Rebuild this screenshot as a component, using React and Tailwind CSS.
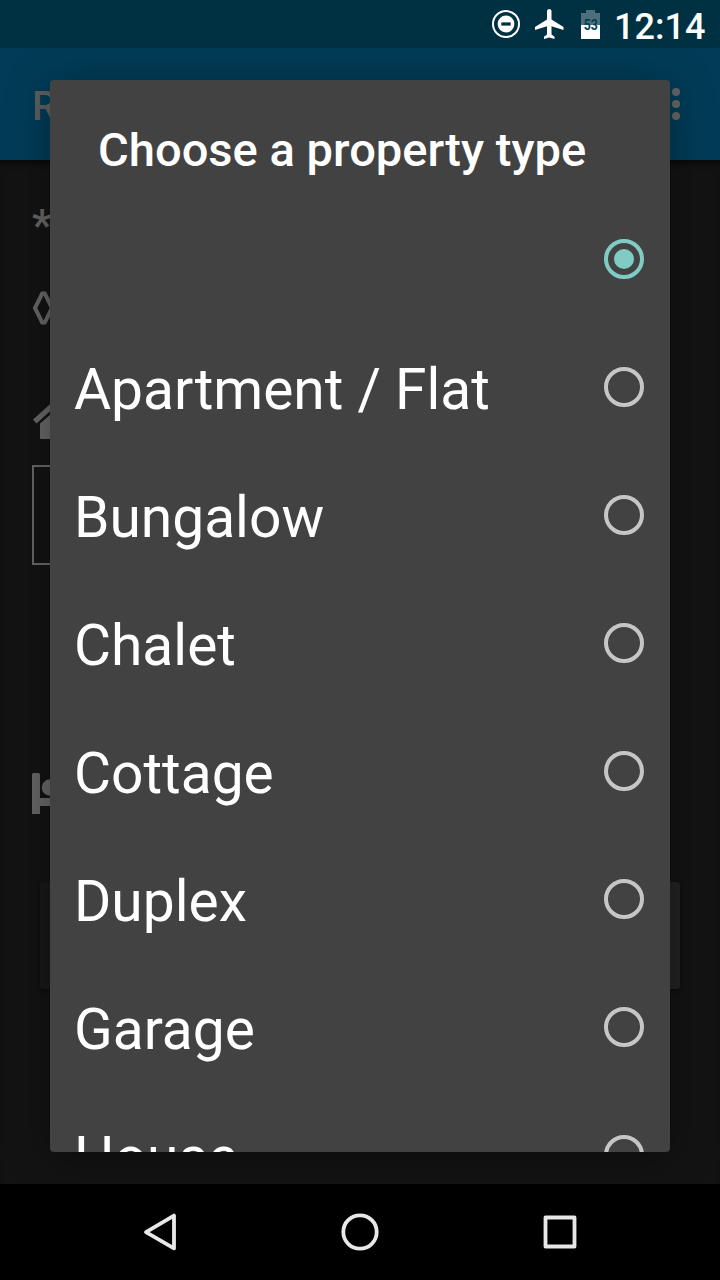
const OPTIONS = ['', 'Apartment / Flat', 'Bungalow', 'Chalet', 'Cottage', 'Duplex', 'Garage', 'House'];

function StatusBar() {
  return (
    <header className="flex h-12 shrink-0 items-center justify-end bg-[#003143] pr-4 text-white">
      <svg className="mr-[12px] h-7 w-7" viewBox="0 0 28 28" aria-hidden="true">
        <circle cx="14" cy="14" r="13" fill="none" stroke="currentColor" strokeWidth="2" />
        <circle cx="14" cy="14" r="8.4" fill="currentColor" />
        <rect x="9.3" y="12.4" width="9.4" height="3.2" fill="#003143" />
      </svg>
      <svg className="mr-[13px] h-9 w-9" viewBox="0 0 24 24" fill="currentColor" aria-hidden="true">
        <path d="M21 16v-2l-8-5V3.500c0-.83-.67-1.500-1.500-1.500S10 2.670 10 3.500V9l-8 5v2l8-2.500V19l-2 1.500V22l3.500-1 3.500 1v-1.500L13 19v-5.500l8 2.500z" />
      </svg>
      <svg className="mr-3.5 h-[29px] w-[19px]" viewBox="0 0 19 29" aria-hidden="true">
        <path d="M0 3h5V0h9v3h5v12H0z" fill="#4d6f7b" />
        <path d="M0 15h19v14H0z" fill="#fff" />
        <text transform="translate(9.700 20.200) scale(.82 1)" textAnchor="middle" fill="#003e54" className="font-['Roboto',sans-serif] text-[15px] font-bold">53</text>
      </svg>
      <span className="w-[90px] pt-[5px] text-[36px] leading-none font-medium whitespace-nowrap">12:14</span>
    </header>
  );
}

function AppBar() {
  return (
    <div className="flex h-28 shrink-0 items-center justify-between bg-[#003c57] pr-10 pl-8 text-[#5f5f5f]">
      <span className="pt-1.5 text-[40px] leading-none font-medium">R</span>
      <div className="flex flex-col gap-1">
        <i className="h-2 w-2 rounded-full bg-[#666]" />
        <i className="h-2 w-2 rounded-full bg-[#666]" />
        <i className="h-2 w-2 rounded-full bg-[#666]" />
      </div>
    </div>
  );
}

function Form() {
  return (
    <main className="flex flex-1 flex-col bg-[#131313] px-8 pt-[39px] text-[#666] shadow-[inset_0_6px_6px_-3px_#080808]">
      <span className="h-[91px] text-[45px] leading-[54px] font-medium">*</span>
      <svg className="h-9 w-[22px]" viewBox="0 0 22 36" fill="none" stroke="currentColor" strokeWidth="4" aria-hidden="true">
        <path d="M3 18 10.200 3.500h2.600L20 18l-7.200 14.500h-2.600z" />
      </svg>
      <svg className="mt-[71px] h-[44px] w-[50px]" viewBox="0 0 50 44" fill="currentColor" aria-hidden="true">
        <path d="M1 22.500 25 1l24 21.500-3.500 4L25 8 4.500 26.500z" strokeLinejoin="round" />
        <path d="M8 26.500 25 12l17 14.500V41q0 1-1 1H9q-1 0-1-1z" />
      </svg>
      <div className="mt-6 h-[100px] w-64 border-2 border-[#666]" />
      <svg className="mt-[208px] h-[41px] w-14" viewBox="0 0 56 41" fill="currentColor" aria-hidden="true">
        <path d="M0 1.500Q0 0 1.500 0h5Q8 0 8 1.500V25h48v16h-8v-8H8v8H0z" />
        <circle cx="18" cy="14.500" r="8.200" />
      </svg>
      <div className="mx-2 mt-[68px] h-[107px] rounded bg-linear-to-r from-[#181818] from-[15%] to-[#222] to-90% shadow-[0_2px_4px_#0b0b0b]" />
    </main>
  );
}

function Radio({ checked }) {
  return checked ? (
    <span className="flex h-10 w-10 items-center justify-center rounded-full border-4 border-[#80cbc4]">
      <span className="h-5 w-5 rounded-full bg-[#80cbc4]" />
    </span>
  ) : (
    <span className="h-10 w-10 rounded-full border-4 border-[#c6c6c6]" />
  );
}

function Dialog() {
  return (
    <section role="dialog" className="absolute top-20 left-[50px] flex h-[1072px] w-[620px] flex-col overflow-hidden rounded bg-[#424242] text-white shadow-[0_6px_44px_rgba(0,0,0,0.35)]">
      <h1 className="h-[115px] shrink-0 pt-[42px] pl-12 text-[47.100px] leading-[56px] font-medium whitespace-nowrap">Choose a property type</h1>
      <ul>
        {OPTIONS.map((label, i) => (
          <li key={i} className="flex h-32 items-center justify-between pr-[26px] pl-6">
            <span className="pt-[5px] text-[56.900px] leading-[67px] whitespace-nowrap">{label}</span>
            <Radio checked={i === 0} />
          </li>
        ))}
      </ul>
    </section>
  );
}

function NavBar() {
  return (
    <nav className="flex h-24 shrink-0 items-center justify-center gap-40 bg-black text-[#e8e8e8]">
      <svg className="h-10 w-10" viewBox="0 0 40 40" fill="none" stroke="currentColor" strokeWidth="3.800" strokeLinejoin="round" aria-hidden="true">
        <path d="M6 20.200 34 3.600v32.800z" />
      </svg>
      <svg className="h-10 w-10" viewBox="0 0 40 40" fill="none" stroke="currentColor" strokeWidth="3.800" aria-hidden="true">
        <circle cx="20" cy="20" r="16.700" />
      </svg>
      <svg className="h-10 w-10" viewBox="0 0 40 40" fill="none" stroke="currentColor" strokeWidth="3.800" strokeLinejoin="round" aria-hidden="true">
        <path d="M5.500 5.500h29v29h-29z" />
      </svg>
    </nav>
  );
}

export default function App() {
  return (
    <div className="relative flex h-[1280px] w-[720px] flex-col overflow-hidden bg-black font-['Roboto',sans-serif]">
      <StatusBar />
      <AppBar />
      <Form />
      <Dialog />
      <NavBar />
    </div>
  );
}
